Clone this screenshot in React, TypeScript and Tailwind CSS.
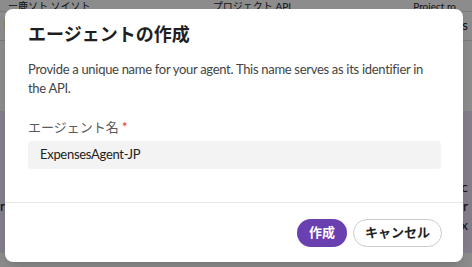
import React from 'react'

const font = { fontFamily: 'Lato, "Noto Sans CJK JP", sans-serif' }

function Backdrop() {
    // page sitting behind the modal, dimmed by the overlay
    return (
        <div className="flex h-[267px] w-[472px] flex-col bg-white text-[13px] text-[#222]">
            <div className="flex h-[12px] items-center justify-between overflow-hidden border-b border-[#ddd] px-2 text-[10px] leading-[12px]">
                <span>ー鹿ソト ソイソト</span>
                <span>プロジェクト API</span>
                <span className="pr-2">Project ro</span>
            </div>
            <div className="flex h-[29px] items-center justify-between border-b border-[#ddd] pl-[2px] pr-1">
                <span>ヒ</span>
                <span>as</span>
            </div>
            <div className="h-[70px] bg-white" />
            <div className="flex flex-1 flex-col items-end bg-[#f0e4fb] pr-1 pt-[66px] text-[14px] leading-[19px]">
                <span className="flex w-full justify-between"><span /> <span>g c</span></span>
                <span className="flex w-full justify-between"><span>r</span><span>er</span></span>
                <span>ex</span>
            </div>
            <div className="h-[14px] bg-white" />
        </div>
    )
}

export default function App() {
    return (
        <div className="relative h-[267px] w-[472px] overflow-hidden" style={font}>
            <Backdrop />
            <div className="absolute inset-0 bg-black/45" />

            <div className="absolute left-[5px] top-[9px] flex h-[253px] w-[458px] flex-col rounded-lg bg-white shadow-lg">
                <div className="flex flex-col px-[23px] pt-[13px]">
                    <h2 className="text-[18px] font-bold leading-[24px] text-[#1f1f1f]">エージェントの作成</h2>
                    <p className="mt-[14px] whitespace-nowrap text-[13px] leading-[19px] tracking-[-0.3px] text-[#444]">
                        Provide a unique name for your agent. This name serves as its identifier in
                        <br />
                        the API.
                    </p>
                    <label className="mt-[20px] text-[13px] leading-[18px] text-[#5a5a5a]">
                        エージェント名 <span className="text-[#d93025]">*</span>
                    </label>
                    <div className="mt-[5px] flex h-[28px] w-[413px] items-center rounded bg-[#f3f3f3] px-3 text-[13px] tracking-[-0.3px] text-[#222]">
                        ExpensesAgent-JP
                    </div>
                </div>
                <div className="mt-auto border-t border-[#e6e6e6]">
                    <div className="flex items-center justify-end gap-[6px] px-[21px] pb-[15px] pt-[16px]">
                        <button className="h-[28px] rounded-full bg-[#6a3fb0] px-[12px] text-[13px] font-bold text-white">
                            作成
                        </button>
                        <button className="h-[28px] rounded-full border border-[#ccc] bg-white px-[11px] text-[13px] font-bold text-[#222]">
                            キャンセル
                        </button>
                    </div>
                </div>
            </div>
        </div>
    )
}
